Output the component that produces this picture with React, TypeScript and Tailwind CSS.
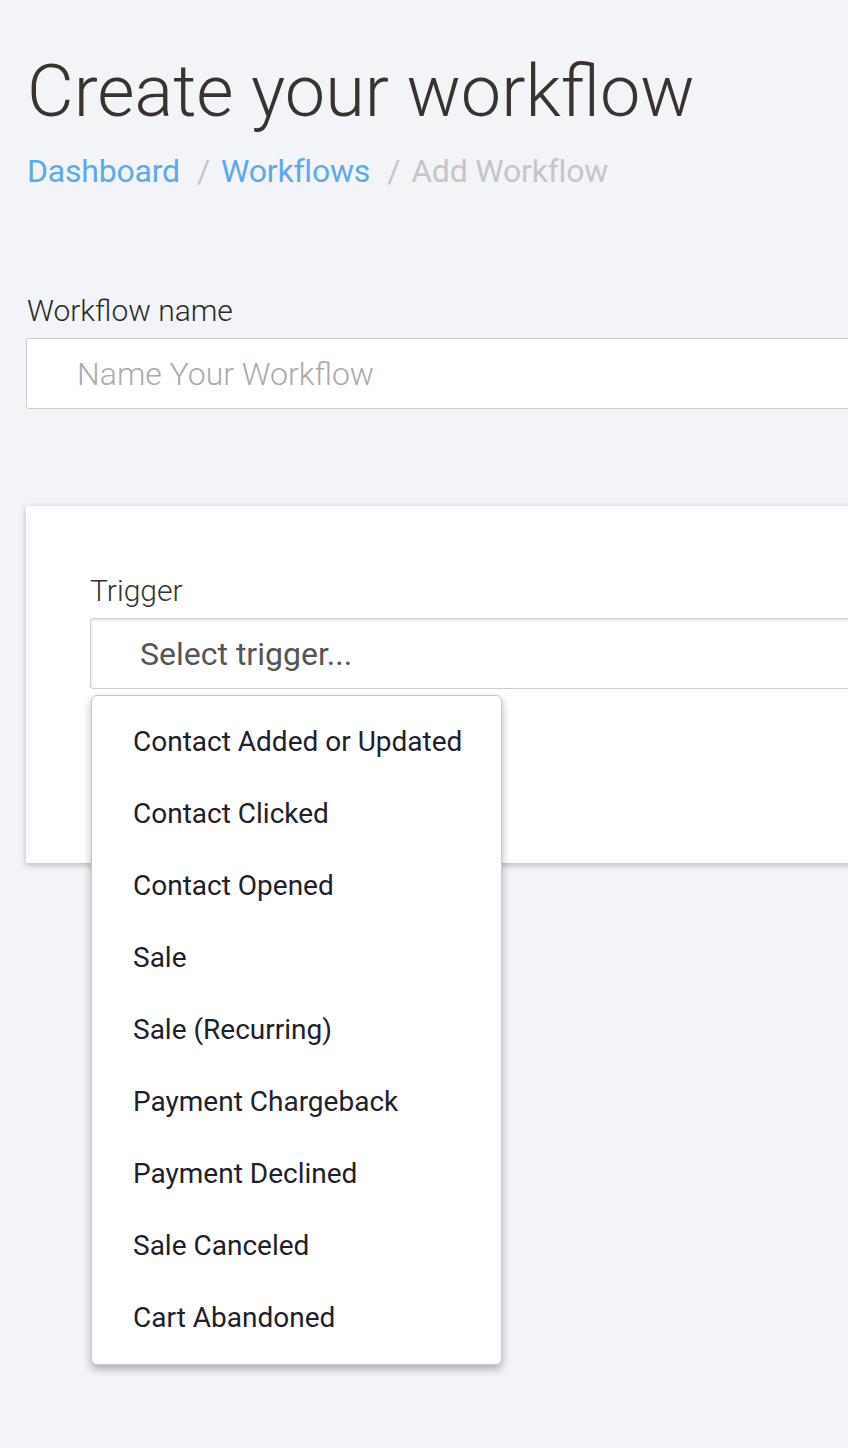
const triggers = [
  "Contact Added or Updated",
  "Contact Clicked",
  "Contact Opened",
  "Sale",
  "Sale (Recurring)",
  "Payment Chargeback",
  "Payment Declined",
  "Sale Canceled",
  "Cart Abandoned",
];

export default function App() {
  return (
    <div className="w-full min-h-[1448px] overflow-hidden bg-[#f3f4f8] font-['Roboto',sans-serif]">
      <div className="w-[1100px] pl-[26px] pt-[52px]">
        <h1 className="text-[72px] leading-[80px] font-light text-[#38332d] pl-[1px]">
          Create your workflow
        </h1>
        <nav className="mt-[19px] flex items-center text-[32px] leading-[40px] pl-[1px] tracking-[-0.2px]">
          <span className="text-[#5aaaf0]">Dashboard</span>
          <span className="text-[#c6c6c6] pl-[17px] pr-[11px]">/</span>
          <span className="text-[#5aaaf0]">Workflows</span>
          <span className="text-[#c6c6c6] pl-[17px] pr-[11px]">/</span>
          <span className="text-[#c6c6c6]">Add Workflow</span>
        </nav>

        <div className="mt-[102px]">
          <label className="block text-[30px] leading-[36px] font-light text-[#2a2a2a] pl-[1px]">
            Workflow name
          </label>
          <div className="mt-[9px] h-[71px] bg-white border border-[#cccccc] rounded-[3px] flex items-center pl-[50px]">
            <span className="text-[32px] font-light text-[#ababab]">Name Your Workflow</span>
          </div>
        </div>

        <div className="mt-[97px] h-[357px] bg-white rounded-[2px] shadow-[0_2px_6px_rgba(0,0,0,0.25)] pl-[64px] pt-[67px] relative">
          <label className="block text-[30px] leading-[36px] font-light text-[#333333]">
            Trigger
          </label>
          <div className="mt-[9px] h-[71px] border border-[#cccccc] rounded-[3px] shadow-[inset_0_2px_4px_rgba(0,0,0,0.1)] flex items-center pl-[49px]">
            <span className="text-[32px] text-[#555555]">Select trigger...</span>
          </div>

          <ul className="absolute left-[65px] top-[189px] w-[411px] bg-white border border-[#c8c8c8] rounded-[6px] shadow-[0_4px_8px_rgba(0,0,0,0.3)] py-[10px] z-10">
            {triggers.map((t) => (
              <li
                key={t}
                className="h-[72px] flex items-center pl-[41px] text-[28px] text-[#1e212b]"
              >
                {t}
              </li>
            ))}
          </ul>
        </div>
      </div>
    </div>
  );
}
